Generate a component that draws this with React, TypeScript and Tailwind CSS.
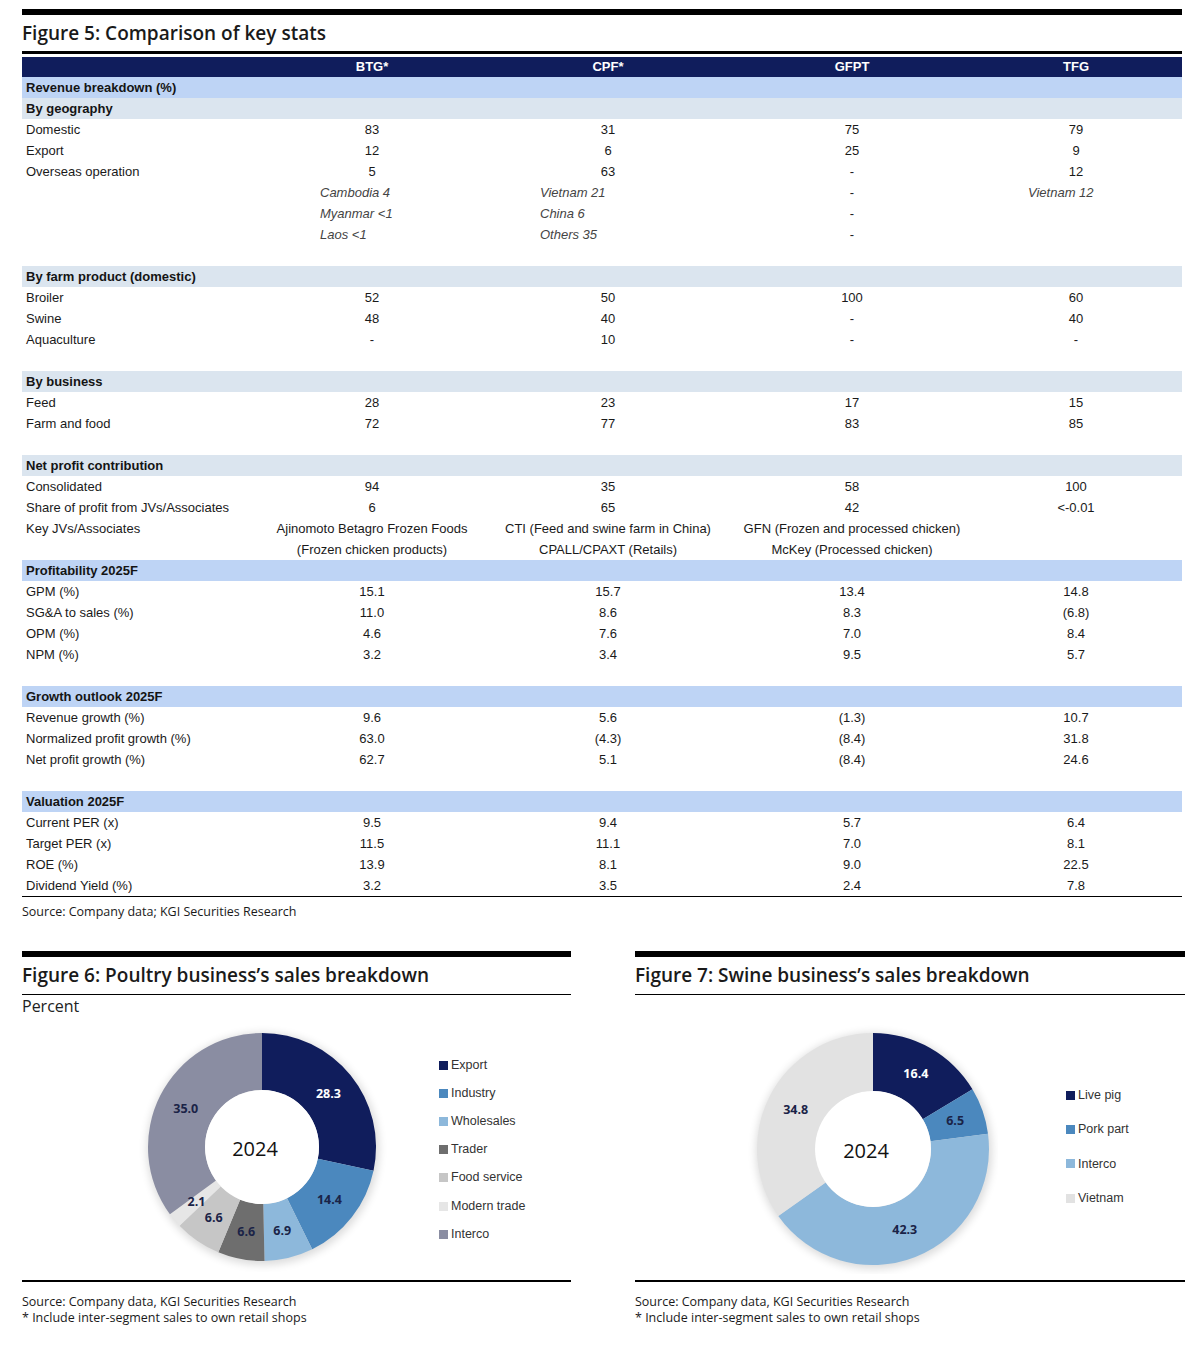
import React from "react";

type Seg = { v: number; color: string; text: string; label: string };

function pt(cx: number, cy: number, r: number, a: number) {
  const rad = (a * Math.PI) / 180;
  return [cx + r * Math.sin(rad), cy - r * Math.cos(rad)];
}

function arc(cx: number, cy: number, ri: number, ro: number, a0: number, a1: number) {
  const large = a1 - a0 > 180 ? 1 : 0;
  const [x0, y0] = pt(cx, cy, ro, a0);
  const [x1, y1] = pt(cx, cy, ro, a1);
  const [x2, y2] = pt(cx, cy, ri, a1);
  const [x3, y3] = pt(cx, cy, ri, a0);
  return `M${x0} ${y0} A${ro} ${ro} 0 ${large} 1 ${x1} ${y1} L${x2} ${y2} A${ri} ${ri} 0 ${large} 0 ${x3} ${y3} Z`;
}

function Donut({ segs, ro, ri, id }: { segs: Seg[]; ro: number; ri: number; id: string }) {
  const total = segs.reduce((s, x) => s + x.v, 0);
  const cx = 125;
  const cy = 125;
  let acc = 0;
  const items = segs.map((s) => {
    const a0 = (acc / total) * 360;
    acc += s.v;
    const a1 = (acc / total) * 360;
    return { ...s, a0, a1 };
  });
  const rm = (ri + ro) / 2;
  return (
    <svg width={250} height={250} viewBox="0 0 250 250">
      <defs>
        <filter id={id} x="-20%" y="-20%" width="140%" height="140%">
          <feGaussianBlur stdDeviation="4" />
        </filter>
      </defs>
      <circle cx={cx + 1} cy={cy + 2} r={ro + 2} fill="#000" opacity={0.14} filter={`url(#${id})`} />
      {items.map((s, i) => (
        <path key={i} d={arc(cx, cy, ri, ro, s.a0, s.a1)} fill={s.color} />
      ))}
      <circle cx={cx} cy={cy} r={ri} fill="#fff" />
      {items.map((s, i) => {
        const [x, y] = pt(cx, cy, rm, (s.a0 + s.a1) / 2);
        return (
          <text
            key={"t" + i}
            x={x}
            y={y}
            textAnchor="middle"
            dominantBaseline="central"
            fill={s.text}
            fontSize={12.5}
            fontWeight={700}
            fontFamily="'Open Sans', sans-serif"
          >
            {s.label}
          </text>
        );
      })}
      <text
        x={cx - 7}
        y={cy + 1}
        textAnchor="middle"
        dominantBaseline="central"
        fill="#111"
        fontSize={20}
        fontFamily="'Open Sans', sans-serif"
      >
        2024
      </text>
    </svg>
  );
}

const NAVY = "#101d5c";
const STEEL = "#4b88be";
const LIGHTB = "#8db8db";
const DARKT = "#1a2347";

const poultry: Seg[] = [
  { v: 28.3, color: NAVY, text: "#fff", label: "28.3" },
  { v: 14.4, color: STEEL, text: DARKT, label: "14.4" },
  { v: 6.9, color: LIGHTB, text: DARKT, label: "6.9" },
  { v: 6.6, color: "#6e6e6e", text: DARKT, label: "6.6" },
  { v: 6.6, color: "#c6c6c6", text: DARKT, label: "6.6" },
  { v: 2.1, color: "#e6e6e6", text: DARKT, label: "2.1" },
  { v: 35.0, color: "#8a8da2", text: DARKT, label: "35.0" },
];

const swine: Seg[] = [
  { v: 16.4, color: NAVY, text: "#fff", label: "16.4" },
  { v: 6.5, color: STEEL, text: DARKT, label: "6.5" },
  { v: 42.3, color: LIGHTB, text: DARKT, label: "42.3" },
  { v: 34.8, color: "#e2e2e2", text: DARKT, label: "34.8" },
];

type Row =
  | { k: "band"; label: string; tone: "blue" | "light" }
  | { k: "blank" }
  | { k: "data"; label: string; vals: string[] }
  | { k: "sub"; vals: string[] };

const rows: Row[] = [
  { k: "band", label: "Revenue breakdown (%)", tone: "blue" },
  { k: "band", label: "By geography", tone: "light" },
  { k: "data", label: "Domestic", vals: ["83", "31", "75", "79"] },
  { k: "data", label: "Export", vals: ["12", "6", "25", "9"] },
  { k: "data", label: "Overseas operation", vals: ["5", "63", "-", "12"] },
  { k: "sub", vals: ["Cambodia 4", "Vietnam 21", "-", "Vietnam 12"] },
  { k: "sub", vals: ["Myanmar <1", "China 6", "-", ""] },
  { k: "sub", vals: ["Laos <1", "Others 35", "-", ""] },
  { k: "blank" },
  { k: "band", label: "By farm product (domestic)", tone: "light" },
  { k: "data", label: "Broiler", vals: ["52", "50", "100", "60"] },
  { k: "data", label: "Swine", vals: ["48", "40", "-", "40"] },
  { k: "data", label: "Aquaculture", vals: ["-", "10", "-", "-"] },
  { k: "blank" },
  { k: "band", label: "By business", tone: "light" },
  { k: "data", label: "Feed", vals: ["28", "23", "17", "15"] },
  { k: "data", label: "Farm and food", vals: ["72", "77", "83", "85"] },
  { k: "blank" },
  { k: "band", label: "Net profit contribution", tone: "light" },
  { k: "data", label: "Consolidated", vals: ["94", "35", "58", "100"] },
  { k: "data", label: "Share of profit from JVs/Associates", vals: ["6", "65", "42", "<-0.01"] },
  {
    k: "data",
    label: "Key JVs/Associates",
    vals: ["Ajinomoto Betagro Frozen Foods", "CTI (Feed and swine farm in China)", "GFN (Frozen and processed chicken)", ""],
  },
  { k: "data", label: "", vals: ["(Frozen chicken products)", "CPALL/CPAXT (Retails)", "McKey (Processed chicken)", ""] },
  { k: "band", label: "Profitability 2025F", tone: "blue" },
  { k: "data", label: "GPM (%)", vals: ["15.1", "15.7", "13.4", "14.8"] },
  { k: "data", label: "SG&A to sales (%)", vals: ["11.0", "8.6", "8.3", "(6.8)"] },
  { k: "data", label: "OPM (%)", vals: ["4.6", "7.6", "7.0", "8.4"] },
  { k: "data", label: "NPM (%)", vals: ["3.2", "3.4", "9.5", "5.7"] },
  { k: "blank" },
  { k: "band", label: "Growth outlook 2025F", tone: "blue" },
  { k: "data", label: "Revenue growth (%)", vals: ["9.6", "5.6", "(1.3)", "10.7"] },
  { k: "data", label: "Normalized profit growth (%)", vals: ["63.0", "(4.3)", "(8.4)", "31.8"] },
  { k: "data", label: "Net profit growth  (%)", vals: ["62.7", "5.1", "(8.4)", "24.6"] },
  { k: "blank" },
  { k: "band", label: "Valuation 2025F", tone: "blue" },
  { k: "data", label: "Current PER (x)", vals: ["9.5", "9.4", "5.7", "6.4"] },
  { k: "data", label: "Target PER (x)", vals: ["11.5", "11.1", "7.0", "8.1"] },
  { k: "data", label: "ROE (%)", vals: ["13.9", "8.1", "9.0", "22.5"] },
  { k: "data", label: "Dividend Yield (%)", vals: ["3.2", "3.5", "2.4", "7.8"] },
];

const GRID = "grid grid-cols-[240px_220px_252px_236px_212px] h-[21px] items-center";

function TableRow({ r }: { r: Row }) {
  if (r.k === "blank") return <div className="h-[21px]" />;
  if (r.k === "band")
    return (
      <div
        className={
          "h-[21px] flex items-center pl-[4px] font-bold text-[13px] text-[#141414] " +
          (r.tone === "blue" ? "bg-[#bed4f5]" : "bg-[#dbe5ef]")
        }
      >
        {r.label}
      </div>
    );
  if (r.k === "sub")
    return (
      <div className={GRID}>
        <div />
        {r.vals.map((v, i) =>
          v === "-" ? (
            <div key={i} className="text-center text-[13px] text-[#222]">
              -
            </div>
          ) : (
            <div key={i} className="pl-[58px] italic text-[13px] text-[#444] whitespace-nowrap">
              {v}
            </div>
          )
        )}
      </div>
    );
  return (
    <div className={GRID}>
      <div className="pl-[4px] text-[13px] text-[#1a1a1a] whitespace-nowrap">{r.label}</div>
      {r.vals.map((v, i) => (
        <div key={i} className="text-center text-[13px] text-[#1a1a1a] whitespace-nowrap">
          {v}
        </div>
      ))}
    </div>
  );
}

function Legend({ items, gap, top, ml }: { items: [string, string][]; gap: string; top: string; ml: string }) {
  return (
    <div className={"flex flex-col " + top + " " + ml}>
      {items.map(([c, t]) => (
        <div key={t} className={"flex items-center gap-[3px] " + gap}>
          <span className="w-[9px] h-[9px] inline-block" style={{ background: c }} />
          <span className="text-[12.5px] text-[#333] font-['Liberation_Sans',Arial,sans-serif]">{t}</span>
        </div>
      ))}
    </div>
  );
}

export default function App() {
  return (
    <div className="w-[1200px] min-h-[1346px] bg-white text-[#1a1a1a]">
      <div className="pl-[22px] pr-[18px] pt-[9px]">
        <div className="h-[6px] bg-black" />
        <div className="h-[36px] flex items-center font-['Open_Sans',sans-serif] font-semibold text-[19px] text-[#1a1a1a]">
          Figure 5: Comparison of key stats
        </div>
        <div className="h-[3px] bg-black" />
        <div className="h-[3px]" />
        <div className="font-['Liberation_Sans',Arial,sans-serif]">
          <div className={"grid grid-cols-[240px_220px_252px_236px_212px] h-[20px] items-center bg-[#101d5c] text-white font-bold text-[13px]"}>
            <div />
            <div className="text-center">BTG*</div>
            <div className="text-center">CPF*</div>
            <div className="text-center">GFPT</div>
            <div className="text-center">TFG</div>
          </div>
          {rows.map((r, i) => (
            <TableRow key={i} r={r} />
          ))}
          <div className="h-px bg-black" />
        </div>
        <div className="mt-[8px] text-[12.5px] leading-[14px] font-['Open_Sans',sans-serif] text-[#1a1a1a]">
          Source: Company data; KGI Securities Research
        </div>
      </div>

      <div className="flex pl-[22px] gap-[64px] mt-[32px]">
        <div className="w-[549px]">
          <div className="h-[6px] bg-black" />
          <div className="h-[37px] flex items-center font-['Open_Sans',sans-serif] font-semibold text-[19px] text-[#1a1a1a]">
            Figure 6: Poultry business’s sales breakdown
          </div>
          <div className="h-px bg-black" />
          <div className="h-[22px] flex items-center font-['Open_Sans',sans-serif] text-[16px] text-[#222]">Percent</div>
          <div className="h-[263px] flex items-start">
            <div className="ml-[115px] mt-[5px]">
              <Donut segs={poultry} ro={114} ri={57} id="sh1" />
            </div>
            <Legend
              ml="ml-[52px]"
              top="mt-[34px]"
              gap="h-[28.2px]"
              items={[
                [NAVY, "Export"],
                [STEEL, "Industry"],
                [LIGHTB, "Wholesales"],
                ["#6e6e6e", "Trader"],
                ["#c6c6c6", "Food service"],
                ["#e6e6e6", "Modern trade"],
                ["#8a8da2", "Interco"],
              ]}
            />
          </div>
          <div className="h-[2px] bg-black" />
          <div className="mt-[12px] text-[12.5px] leading-[16px] font-['Open_Sans',sans-serif] text-[#1a1a1a]">
            <div>Source: Company data, KGI Securities Research</div>
            <div>* Include inter-segment sales to own retail shops</div>
          </div>
        </div>

        <div className="w-[550px]">
          <div className="h-[6px] bg-black" />
          <div className="h-[37px] flex items-center font-['Open_Sans',sans-serif] font-semibold text-[19px] text-[#1a1a1a]">
            Figure 7: Swine business’s sales breakdown
          </div>
          <div className="h-px bg-black" />
          <div className="h-[22px]" />
          <div className="h-[263px] flex items-start">
            <div className="ml-[113px] mt-[7px]">
              <Donut segs={swine} ro={116} ri={58} id="sh2" />
            </div>
            <Legend
              ml="ml-[68px]"
              top="mt-[61px]"
              gap="h-[34.4px]"
              items={[
                [NAVY, "Live pig"],
                [STEEL, "Pork part"],
                [LIGHTB, "Interco"],
                ["#e2e2e2", "Vietnam"],
              ]}
            />
          </div>
          <div className="h-[2px] bg-black" />
          <div className="mt-[12px] text-[12.5px] leading-[16px] font-['Open_Sans',sans-serif] text-[#1a1a1a]">
            <div>Source: Company data, KGI Securities Research</div>
            <div>* Include inter-segment sales to own retail shops</div>
          </div>
        </div>
      </div>
    </div>
  );
}
